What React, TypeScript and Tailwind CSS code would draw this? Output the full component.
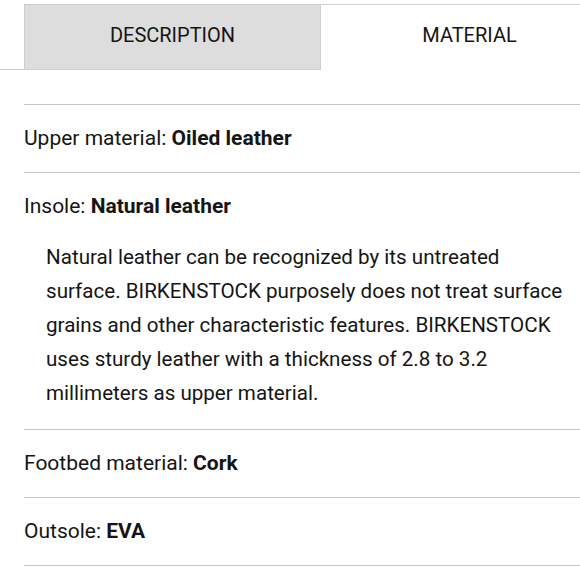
import React from 'react';

const rows = [
  { label: 'Upper material:', value: 'Oiled leather' },
  {
    label: 'Insole:',
    value: 'Natural leather',
    note: [
      'Natural leather can be recognized by its untreated',
      'surface. BIRKENSTOCK purposely does not treat surface',
      'grains and other characteristic features. BIRKENSTOCK',
      'uses sturdy leather with a thickness of 2.8 to 3.2',
      'millimeters as upper material.',
    ],
  },
  { label: 'Footbed material:', value: 'Cork' },
  { label: 'Outsole:', value: 'EVA' },
];

export default function App() {
  return (
    <div
      className="w-[580px] h-[580px] overflow-hidden bg-white text-[#151515]"
      style={{ fontFamily: 'Roboto, "Liberation Sans", sans-serif' }}
    >
      {/* Tabs */}
      <div className="flex w-[618px] pt-1">
        <div className="w-6 border-b border-[#cfcfcf]" />
        <div className="w-[297px] h-[66px] flex items-center justify-center pb-1 bg-[#dddddd] border border-[#cfcfcf] text-[20px]">
          DESCRIPTION
        </div>
        <div className="w-[297px] h-[66px] flex items-center justify-center pb-1 border-t border-b border-b-transparent border-[#cfcfcf] text-[20px]">
          MATERIAL
        </div>
      </div>

      {/* Material list */}
      <div className="ml-6 mt-[34px] border-t border-[#c6c6c6]">
        {rows.map((row) => (
          <div key={row.label} className="border-b border-[#c6c6c6] pt-[16px] pb-[17px]">
            <div className="text-[21px] leading-[34px] whitespace-nowrap">
              {row.label} <span className="font-bold">{row.value}</span>
            </div>
            {row.note && (
              <p className="mt-[17px] mb-[2px] pl-[22px] text-[20.6px] leading-[34px] whitespace-nowrap">
                {row.note.map((line) => (
                  <span key={line} className="block">{line}</span>
                ))}
              </p>
            )}
          </div>
        ))}
      </div>
    </div>
  );
}
